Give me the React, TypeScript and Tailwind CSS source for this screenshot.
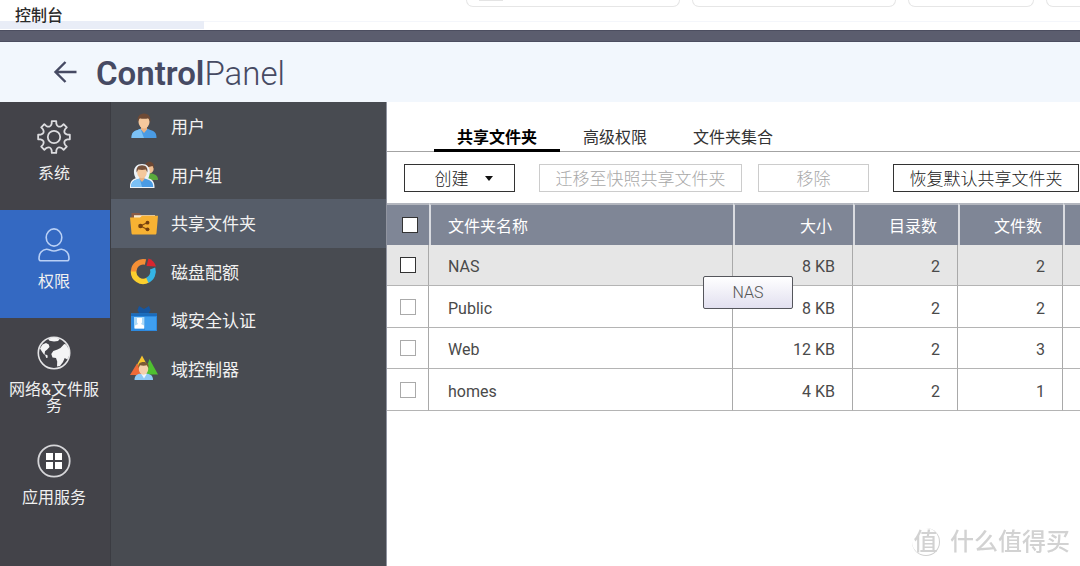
import { useState } from 'react';
import type { ReactNode } from 'react';
import { clsx } from 'clsx';

interface Folder {
  name: string;
  size: string;
  dirs: number;
  files: number;
}

const folders: Folder[] = [
  { name: 'NAS', size: '8 KB', dirs: 2, files: 2 },
  { name: 'Public', size: '8 KB', dirs: 2, files: 2 },
  { name: 'Web', size: '12 KB', dirs: 2, files: 3 },
  { name: 'homes', size: '4 KB', dirs: 2, files: 1 },
];

const tabs = ['共享文件夹', '高级权限', '文件夹集合'];

const gearPath = () => {
  const at = (deg: number, r: number) => {
    const a = (deg * Math.PI) / 180;
    return `${(18 + r * Math.sin(a)).toFixed(2)} ${(18 - r * Math.cos(a)).toFixed(2)}`;
  };
  let d = `M${at(-8, 16)}`;
  for (let k = 0; k < 8; k++) {
    const a = k * 45;
    d += `L${at(a + 8, 16)}L${at(a + 10, 13.5)}Q${at(a + 22.5, 9.5)} ${at(a + 35, 13.5)}L${at(a + 37, 16)}`;
  }
  return d + 'Z';
};

const GearIcon = () => (
  <svg viewBox="0 0 36 36" className="size-9" fill="none" stroke="#dcdcdf" strokeWidth="1.8" strokeLinejoin="round">
    <path d={gearPath()} />
    <circle cx="18" cy="18" r="6.2" />
  </svg>
);

const PersonIcon = () => (
  <svg viewBox="0 0 36 36" className="size-9" fill="none" stroke="#b9d0f5" strokeWidth="1.6" strokeLinejoin="round">
    <ellipse cx="18" cy="10.5" rx="7.8" ry="8.6" />
    <path d="M10.5 22.2C13 22 14.5 24 18 24s5-2 7.500-1.800c4.500.3 7.500 4.300 7.500 9.300 0 1.500-.6 2.300-2 2.300H5c-1.400 0-2-.8-2-2.300 0-5 3-9 7.500-9.300z" />
  </svg>
);

const GlobeIcon = () => (
  <svg viewBox="0 0 36 36" className="size-9">
    <circle cx="18" cy="18" r="15.700" fill="none" stroke="#e4e4e6" strokeWidth="1.600" />
    <path fill="#f4f4f5" d="M12 3.800c4-1.600 8-1.500 12 0l-2 2.200-4 .4-4.500-.6z" />
    <path fill="#f4f4f5" d="M6.500 9.500 10 8l2.800 1.500.7 2.500-2.300 2.500-2.200 1.700-.5 4-2.500-3.500-2-3.200z" />
    <path fill="#f4f4f5" d="m9 19.500 2.300.5.500 2.500-1.600.6z" />
    <path fill="#f4f4f5" d="m21.500 14.500 3-1.500 3.700-4 2 .5 3 5.500.2 5-2 4.500-2.700-1.500-1.700 4-3 4-3 .5.200-5-1.200-3.500-3.500-.5-1.200-3.500 2-3z" />
  </svg>
);

const AppsIcon = () => (
  <svg viewBox="0 0 36 36" className="size-9">
    <circle cx="18" cy="18" r="15.700" fill="none" stroke="#d6d6d9" strokeWidth="1.800" />
    <path fill="#fff" d="M10 10h7v7h-7zM19 10h7v7h-7zM10 19h7v7h-7zM19 19h7v7h-7z" />
  </svg>
);

const UserIcon = () => (
  <svg viewBox="0 0 28 28" className="size-7">
    <path fill="#4a9be3" d="M1.500 26c0-5 2-7 6-8l3.500-1.500h6L20.500 18c4 1 6 3 6 8z" />
    <path fill="#7cc1f5" d="M1.500 26c0-5 2-7 6-8l3-1.200L14 26z" />
    <path fill="#e8b183" d="M11 13h6v4.500l-3 3.500-3-3.500z" />
    <ellipse cx="14" cy="10" rx="5.500" ry="6.500" fill="#f4c89d" />
    <path fill="#6e4a35" d="M7.800 10C6.900 5 9.500 1.500 14 1.500S21.100 5 20.200 10l-1.700-3.700c-3 .7-6 .7-9 0z" />
  </svg>
);

const GroupIcon = () => (
  <svg viewBox="0 0 28 28" className="size-7">
    <path fill="#5aa93c" d="M16 12.500h6c4 1 6 2.500 6 6.500H18z" />
    <ellipse cx="19.500" cy="7.500" rx="4.200" ry="5" fill="#f0bf92" />
    <path fill="#6b4733" d="M15 7C14.500 3 16.500.8 19.500.8S24.500 3 24 8l-1.500-3z" />
    <path fill="#edf3f8" d="M0 27c-.3-6 2-8.500 5.700-9.700C1.800 10 4.500 3 12 3s9.500 7 6.300 14.300C22.500 18.500 24.800 21 24.500 27z" />
    <path fill="#4a9be3" d="M1.200 26c0-4.500 2-6.500 5.500-7.500l3-1h5l3 1c3.500 1 5.500 3 5.500 7.500z" />
    <path fill="#7cc1f5" d="M1.200 26c0-4.500 2-6.500 5.500-7.500l3-1L12 26z" />
    <path fill="#e8b183" d="M9.500 14.500h5V18L12 21l-2.500-3z" />
    <ellipse cx="12" cy="11.500" rx="4.800" ry="5.800" fill="#f4c89d" />
    <path fill="#76523c" d="M6.700 11.500C5.700 7 8 4.200 12 4.200S18.300 7 17.300 11.500l-1.500-3c-2.500.6-5 .6-7.600 0z" />
  </svg>
);

const ShareIcon = () => (
  <svg viewBox="0 0 28 28" className="size-7">
    <path fill="#8a5a44" d="M1.500 4h8l2 2H25v5H1.500z" />
    <path fill="#f6e8cf" d="M4 6.200h21V11H4z" />
    <path fill="#f7b233" d="M0 8.500h10L12 6.800h16L26.500 24c-.1 1-.6 1.500-1.500 1.500H3c-.9 0-1.400-.5-1.500-1.500z" />
    <path fill="none" stroke="#8a4f12" strokeWidth="1.300" d="m17.500 13.500-7 3.500 7 3.500" />
    <g fill="#75400f">
      <circle cx="17.500" cy="13.700" r="1.900" />
      <circle cx="10.500" cy="17" r="2.300" />
      <circle cx="17.500" cy="20.300" r="1.900" />
    </g>
  </svg>
);

const QuotaIcon = () => (
  <svg viewBox="0 0 28 28" className="size-7">
    <g fill="none" strokeWidth="5.500">
      <path stroke="#fbcf2e" d="M3.700 12.500A9.500 9.500 0 0 0 18 22" />
      <path stroke="#34b4e4" d="M17.300 22.300A9.500 9.500 0 0 0 22.600 10.500" />
      <path stroke="#f58f35" d="M3.700 13.500A9.500 9.500 0 0 1 15.500 4" />
    </g>
    <path fill="#d8262f" d="M18.500.5c3.500 1 6.500 4 7.500 8l-9.500-.5z" />
  </svg>
);

const DomainSecurityIcon = () => (
  <svg viewBox="0 0 28 28" className="size-7">
    <path fill="#17569f" d="m9 0 5 3 5-3 1.500 4-2 4h-9l-2-4z" />
    <path fill="#2d8ae0" d="M1 7.500h26V25H1z" />
    <path fill="#1b6cbd" d="M1 7.500h26V10H1z" />
    <path fill="#3f9ff0" d="M15 11h11v13H15z" />
    <path fill="#a9d8f8" d="M4 11h10.500v11.500H4z" />
    <path fill="#fff" d="M7 12h5v4.500l-1 1.500 3 1.500v3H5v-3L8 18l-1-1.500z" />
  </svg>
);

const DomainControllerIcon = () => (
  <svg viewBox="0 0 28 28" className="size-7">
    <path fill="#f7c52f" d="m12 .5 7.500 14h-15z" />
    <path fill="#ee6a37" d="M7 8.500 14 20H0z" />
    <path fill="#4fc030" d="M19.500 4 28 19.500H14z" />
    <path fill="#8fc9f4" d="M4.500 25c0-4 2-5.500 5-6.200h8c3.500.7 5.500 2.200 5.500 6.200z" />
    <path fill="#eef6fc" d="m11 18.500 3 5 3-5z" />
    <ellipse cx="13.500" cy="14" rx="4.700" ry="5.700" fill="#f4d0ac" />
    <path fill="#7b5a34" d="M8.500 13C7.700 9 9.700 7 13.500 7s5.800 2 5 6l-1.600-2.800c-2.200.6-4.600.6-6.900 0z" />
  </svg>
);

interface NavItem {
  label: string;
  icon: ReactNode;
}

const sections: NavItem[] = [
  { label: '系统', icon: <GearIcon /> },
  { label: '权限', icon: <PersonIcon /> },
  { label: '网络&文件服务', icon: <GlobeIcon /> },
  { label: '应用服务', icon: <AppsIcon /> },
];

const pages: NavItem[] = [
  { label: '用户', icon: <UserIcon /> },
  { label: '用户组', icon: <GroupIcon /> },
  { label: '共享文件夹', icon: <ShareIcon /> },
  { label: '磁盘配额', icon: <QuotaIcon /> },
  { label: '域安全认证', icon: <DomainSecurityIcon /> },
  { label: '域控制器', icon: <DomainControllerIcon /> },
];

const TopStrip = () => (
  <div className="relative flex h-[30px] justify-between bg-white">
    <div className="absolute inset-x-0 top-[21px] h-px bg-[#f4f6fb]" />
    <div className="absolute left-0 top-[21px] h-2 w-[204px] bg-[#e9edf7]" />
    <div className="relative pl-[15px] pt-1 text-base/6 font-medium text-[#2b2b2b]">控制台</div>
    <div className="flex h-[7px] gap-3">
      <div className="w-[214px] rounded-b-xl border border-t-0 border-[#e6e6e6] px-3">
        <div className="h-px w-6 bg-[#e4e4e4]" />
      </div>
      <div className="w-[204px] rounded-b-xl border border-t-0 border-[#e6e6e6]" />
      <div className="w-[126px] rounded-b-xl border border-t-0 border-[#e6e6e6]" />
      <div className="w-[34px] rounded-bl-xl border-b border-l border-[#e6e6e6]" />
    </div>
  </div>
);

const Header = () => (
  <header className="flex h-[60px] items-center bg-[#f2f7fd] pl-[53px] text-[#464a63]">
    <button type="button" aria-label="Back">
      <svg viewBox="0 0 24 24" className="size-6" fill="none" stroke="currentColor" strokeWidth="2.400">
        <path d="M23.500 12H3M12.500 2 2.500 12l10 10" />
      </svg>
    </button>
    <h1 className="pl-[19px] pt-1 text-[33px]/10 font-semibold">
      Control<span className="font-light">Panel</span>
    </h1>
  </header>
);

interface ToolButtonProps {
  children: ReactNode;
  className: string;
  disabled?: boolean;
}

const ToolButton = ({ children, className, disabled }: ToolButtonProps) => (
  <button
    type="button"
    disabled={disabled}
    className={clsx(
      'flex h-7 shrink-0 items-center justify-center border bg-white pt-px text-[17px]/6 font-light whitespace-nowrap',
      disabled ? 'border-[#cccccc] text-[#a8a8a8]' : 'border-[#333333] text-[#222222]',
      className
    )}
  >
    {children}
  </button>
);

const FolderTable = () => {
  const headCell = 'border-t-2 border-t-[#b3b6be] border-l-2 border-l-[#d9dbe0] pt-1 font-normal';
  const cell = 'border-r border-b border-[#b4b4b4] border-r-[#a9a9a9]';
  const numberCell = clsx(cell, 'pt-1 pr-[17px] text-right');

  return (
    <div className="relative">
      <table className="w-full table-fixed border-separate border-spacing-0 text-base/5 text-[#4a4a4a]">
        <colgroup>
          <col className="w-[42px]" />
          <col />
          <col className="w-[120px]" />
          <col className="w-[105px]" />
          <col className="w-[105px]" />
          <col className="w-[17px]" />
        </colgroup>
        <thead>
          <tr className="h-[42px] bg-[#7f8696] text-white">
            <th className="border-t-2 border-t-[#b3b6be] pl-[15px] text-left">
              <input type="checkbox" aria-label="全选" className="block size-4 appearance-none border border-[#333333] bg-white checked:bg-[#3569c1]" />
            </th>
            <th className={clsx(headCell, 'pl-[17px] text-left')}>文件夹名称</th>
            <th className={clsx(headCell, 'pr-[21px] text-right')}>大小</th>
            <th className={clsx(headCell, 'pr-[21px] text-right')}>目录数</th>
            <th className={clsx(headCell, 'pr-[21px] text-right')}>文件数</th>
            <th className={headCell} />
          </tr>
        </thead>
        <tbody>
          {folders.map((folder, i) => (
            <tr key={folder.name} className={clsx('odd:h-[41px] even:h-[42px]', i === 0 && 'bg-[#e6e6e6]')}>
              <td className={clsx(cell, 'pl-[13px]')}>
                <input
                  type="checkbox"
                  aria-label={folder.name}
                  className={clsx(
                    'block size-4 appearance-none border bg-white checked:bg-[#3569c1]',
                    i === 0 ? 'border-[#333333]' : 'border-[#aaaaaa]'
                  )}
                />
              </td>
              <td className={clsx(cell, 'pt-1 pl-[19px]')}>{folder.name}</td>
              <td className={numberCell}>{folder.size}</td>
              <td className={numberCell}>{folder.dirs}</td>
              <td className={numberCell}>{folder.files}</td>
              <td className="border-b border-[#b4b4b4]" />
            </tr>
          ))}
        </tbody>
      </table>
      {/* hover tooltip of the first row */}
      <div className="absolute right-[287px] top-[73px] flex h-[33px] w-[90px] items-center justify-center rounded-xs border border-[#55565c] bg-linear-to-b from-white to-[#e2e0f0] pt-px text-base font-light text-[#555555]">
        NAS
      </div>
    </div>
  );
};

const App = () => {
  const [section, setSection] = useState('权限');
  const [page, setPage] = useState('共享文件夹');
  const [tab, setTab] = useState('共享文件夹');

  return (
    <div className="flex min-h-screen flex-col overflow-hidden bg-white font-[Roboto,'Noto_Sans_CJK_SC',sans-serif]">
      <TopStrip />
      <div className="h-3 border-y border-[#4c4e60] bg-[#5b5d6e]" />
      <Header />
      <div className="flex flex-1">
        <nav className="w-[110px] shrink-0 bg-[#434349]">
          {sections.map((item) => (
            <button
              key={item.label}
              type="button"
              onClick={() => setSection(item.label)}
              className={clsx(
                'flex h-[108px] w-full flex-col items-center px-[7px] pt-[17px] pr-[9px] text-base/4 text-[#f0f0f0]',
                section === item.label && 'bg-[#3469c2]'
              )}
            >
              {item.icon}
              <span className="pt-[11px] break-all">{item.label}</span>
            </button>
          ))}
        </nav>
        <nav className="w-[276px] shrink-0 border-l border-[#3b3c42] bg-[#484b51]">
          <div className="grid h-[291px] auto-rows-fr">
            {pages.map((item) => (
              <button
                key={item.label}
                type="button"
                onClick={() => setPage(item.label)}
                className={clsx(
                  'flex items-center gap-[13px] pl-[19px] text-[17px]/6 text-[#f2f2f2]',
                  page === item.label && 'bg-[#565d69]'
                )}
              >
                {item.icon}
                <span className="pt-0.5">{item.label}</span>
              </button>
            ))}
          </div>
        </nav>
        <main className="min-w-0 flex-1 border-l border-[#9094a0]">
          <div className="flex h-[50px] items-end border-b border-[#a3a3a3] pl-[47px]">
            {tabs.map((label) => (
              <button
                key={label}
                type="button"
                onClick={() => setTab(label)}
                className={clsx(
                  '-mb-px h-8 border-b-3 px-[23px] pt-1.5 text-base/6',
                  tab === label ? 'border-black font-bold text-black' : 'border-transparent text-[#333333]'
                )}
              >
                {label}
              </button>
            ))}
          </div>
          <div className="flex pt-3 pb-[11px] pl-[17px]">
            <ToolButton className="w-[111px] gap-4 pl-2">
              创建
              <svg viewBox="0 0 8 5" className="h-[5px] w-2" fill="#111111">
                <path d="M0 0h8L4 5z" />
              </svg>
            </ToolButton>
            <ToolButton disabled className="ml-6 w-[203px]">迁移至快照共享文件夹</ToolButton>
            <ToolButton disabled className="ml-4 w-[111px]">移除</ToolButton>
            <ToolButton className="ml-6 w-[186px]">恢复默认共享文件夹</ToolButton>
          </div>
          <FolderTable />
        </main>
      </div>
      <div className="fixed right-[10px] bottom-2 flex items-center gap-[10px] text-2xl/8 font-medium text-[#d2d2d2]">
        <span className="flex size-7 items-center justify-center rounded-full border-r border-b border-[#cfcfcf]">值</span>
        什么值得买
      </div>
    </div>
  );
};

export default App;
